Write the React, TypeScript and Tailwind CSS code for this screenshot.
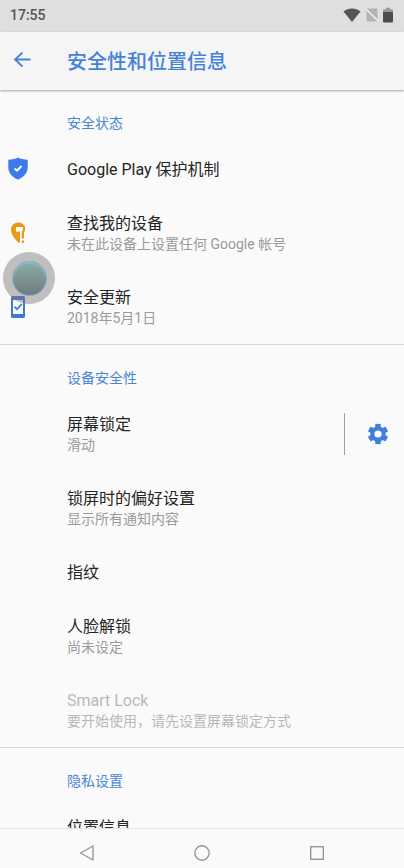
import type { ReactNode } from "react";

function ShieldIcon() {
  return (
    <svg viewBox="0 0 20 24" className="h-6 w-5" aria-hidden="true">
      <path d="M10 0.500C7.500 1.800 4 2.700 0.300 2.800V10.500C0.300 16 4.500 20.500 10 22.500C15.500 20.500 19.700 16 19.700 10.500V2.800C16 2.700 12.500 1.800 10 0.500Z" fill="#3c7bea" />
      <path d="M6.700 11.500L9 13.700L13.500 9" fill="none" stroke="#fff" strokeWidth="1.900" />
    </svg>
  );
}

function FindDeviceIcon() {
  return (
    <svg viewBox="0 0 16 22" className="h-[22px] w-4" aria-hidden="true">
      <path d="M8 0.500A7 7 0 0 0 1 7.500C1 12.500 4.500 16.500 8.300 20.500H10V9.500H6V5H15A7 7 0 0 0 8 0.500Z" fill="#eb9a17" />
      <path d="M12.900 8.500V16.500M12.900 18.500V21" stroke="#eb9a17" strokeWidth="2.200" />
      <path d="M13.900 4.500V9.500" stroke="#eb9a17" strokeWidth="2.200" />
      <circle cx="7.900" cy="7.400" r="2" fill="#fafafa" />
      <path d="M7.900 6.300H12.800V8.700H7.900Z" fill="#fafafa" />
    </svg>
  );
}

function PhoneUpdateIcon() {
  return (
    <svg viewBox="0 0 16 24" className="h-6 w-4" aria-hidden="true">
      <rect x="1" y="1" width="14" height="22" rx="1.500" fill="#3f78d8" />
      <rect x="3" y="5" width="10" height="14" fill="#fafafa" />
      <path d="M4.500 11.700L7 14.200L11.800 9" fill="none" stroke="#3f78d8" strokeWidth="1.800" />
    </svg>
  );
}

function GearIcon() {
  return (
    <svg viewBox="0 0 24 24" className="size-6" aria-hidden="true">
      <g stroke="#3f7fdc" strokeWidth="5.400" strokeLinecap="butt">
        <path d="M12 1.900V22.100" />
        <path d="M3.250 6.950L20.750 17.050" />
        <path d="M20.750 6.950L3.250 17.050" />
      </g>
      <circle cx="12" cy="12" r="7.700" fill="#3f7fdc" />
      <circle cx="12" cy="12" r="3.600" fill="#fafafa" />
    </svg>
  );
}

function StatusBar() {
  return (
    <div className="flex h-8 shrink-0 items-center justify-between bg-[#dfdfdf] pr-[11px] pb-0.5 pl-[10px] text-sm font-medium text-[#555]">
      <time>17:55</time>
      <div className="flex items-center gap-1">
        <svg viewBox="0 0 18 14" className="h-3.5 w-[18px]" aria-hidden="true">
          <path d="M9 14L0.500 3.500C5 -0.500 13 -0.500 17.500 3.500Z" fill="#555" />
        </svg>
        <svg viewBox="0 0 14 14" className="size-3.5" aria-hidden="true">
          <path d="M1.500 0.500H12.500V13.500H1.500Z" fill="#b3b3b3" />
          <path d="M0.500 0.500L13.500 13.500" stroke="#e9e9e9" strokeWidth="1.800" />
        </svg>
        <svg viewBox="0 0 10 16" className="h-4 w-2.5" aria-hidden="true">
          <path d="M3 0.800H7V2.300H9C9.500 2.300 10 2.800 10 3.300V5H0V3.300C0 2.800 0.500 2.300 1 2.300H3Z" fill="#999" />
          <path d="M0 5H10V14.500C10 15 9.500 15.500 9 15.500H1C0.500 15.500 0 15 0 14.500Z" fill="#4c4c4c" />
        </svg>
      </div>
    </div>
  );
}

type RowProps = { title: string; summary?: string; icon?: ReactNode; disabled?: boolean };

function Row({ title, summary, icon, disabled }: RowProps) {
  return (
    <button
      type="button"
      disabled={disabled}
      className={`flex w-full items-center text-left ${summary ? "h-[74px]" : "h-[54px]"}`}
    >
      <span className="flex w-[67px] shrink-0 pl-2">
        <span className="flex w-5 justify-center">{icon}</span>
      </span>
      <span className="flex min-w-0 flex-col pt-0.5">
        <span className={`text-base leading-5 ${disabled ? "text-[#b8b8b8]" : "text-[#242424]"}`}>{title}</span>
        {summary && (
          <span className={`text-sm leading-5 ${disabled ? "text-[#b8b8b8]" : "text-[#9b9b9b]"}`}>{summary}</span>
        )}
      </span>
    </button>
  );
}

function Section({ title, children }: { title: string; children: ReactNode }) {
  return (
    <section className="border-b border-[#dadada] last:border-b-0">
      <h2 className="pt-[23px] pb-[9px] pl-[67px] text-sm leading-5 text-[#4c85d6]">{title}</h2>
      {children}
    </section>
  );
}

export default function App() {
  return (
    <div className="relative flex h-screen flex-col overflow-hidden bg-[#fafafa] font-[Roboto,'Noto_Sans_CJK_SC',sans-serif]">
      <StatusBar />
      <header className="z-10 flex h-[58px] shrink-0 items-center bg-[#f5f5f5] shadow-[0_1px_2px_rgba(0,0,0,0.35)]">
        <div className="w-[67px] shrink-0 pl-3">
          <button type="button" aria-label="返回" className="block">
            <svg viewBox="0 0 20 20" className="size-5" fill="none" stroke="#4583d9" strokeWidth="1.800" aria-hidden="true">
              <path d="M18.500 8.500H3.500M10.500 1.500L3 8.500L10.500 15.500" />
            </svg>
          </button>
        </div>
        <h1 className="pt-0.5 text-xl font-medium text-[#4583d9]">安全性和位置信息</h1>
      </header>

      <main className="min-h-0 flex-1 overflow-hidden">
        <Section title="安全状态">
          <Row title="Google Play 保护机制" icon={<ShieldIcon />} />
          <Row title="查找我的设备" summary="未在此设备上设置任何 Google 帐号" icon={<FindDeviceIcon />} />
          <Row title="安全更新" summary="2018年5月1日" icon={<PhoneUpdateIcon />} />
        </Section>
        <Section title="设备安全性">
          <div className="flex items-center">
            <Row title="屏幕锁定" summary="滑动" />
            <button type="button" aria-label="屏幕锁定设置" className="flex h-[42px] w-[60px] shrink-0 items-center border-l border-[#a0a0a0] pl-[21px]">
              <GearIcon />
            </button>
          </div>
          <Row title="锁屏时的偏好设置" summary="显示所有通知内容" />
          <Row title="指纹" />
          <Row title="人脸解锁" summary="尚未设定" />
          <Row title="Smart Lock" summary="要开始使用，请先设置屏幕锁定方式" disabled />
        </Section>
        <Section title="隐私设置">
          <Row title="位置信息" />
        </Section>
      </main>

      <nav className="flex h-10 shrink-0 items-center justify-around border-t border-[#e4e4e4] px-[29px] pt-2">
        <button type="button" aria-label="后退">
          <svg viewBox="0 0 16 16" className="size-4" fill="none" stroke="#969696" strokeWidth="1.300" strokeLinejoin="round" aria-hidden="true">
            <path d="M14 1V15L1.500 8Z" />
          </svg>
        </button>
        <button type="button" aria-label="主屏幕">
          <svg viewBox="0 0 16 16" className="size-4" fill="none" stroke="#969696" strokeWidth="1.400" aria-hidden="true">
            <circle cx="8" cy="8" r="7.200" />
          </svg>
        </button>
        <button type="button" aria-label="最近任务">
          <svg viewBox="0 0 16 16" className="size-4" fill="none" stroke="#969696" strokeWidth="1.400" aria-hidden="true">
            <rect x="1.700" y="1.700" width="12.600" height="12.600" />
          </svg>
        </button>
      </nav>

      <button
        type="button"
        aria-label="悬浮球"
        className="absolute top-[252px] left-[3px] flex size-[52px] items-center justify-center rounded-full bg-[#777]/45"
      >
        <span className="size-[35px] rounded-full border border-[#86a3cd] bg-linear-to-b from-[#86aaa5]/90 to-[#667576]/90 shadow-[inset_0_1px_1px_#8bd6d4]" />
      </button>
    </div>
  );
}
